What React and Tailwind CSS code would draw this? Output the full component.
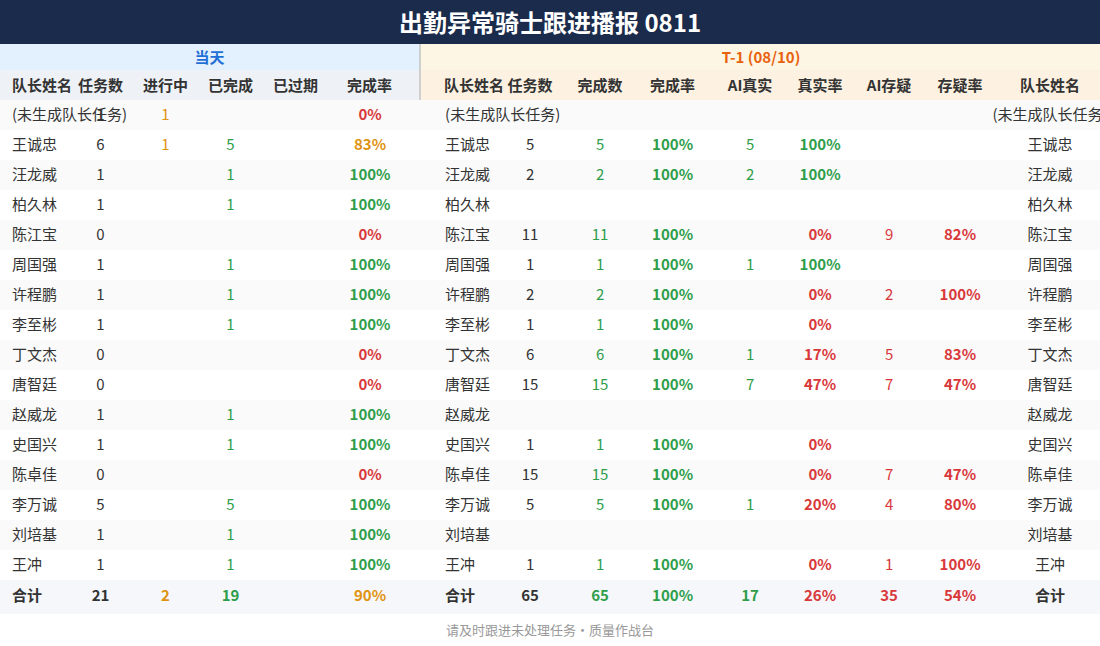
import React from "react";

const G = "text-[#2e9e4a]";
const R = "text-[#d9383a]";
const O = "text-[#e0930f]";

const leftRows = [
  ["(未生成队长任务)", "1", ["1"], null, "", ["0%", "r"]],
  ["王诚忠", "6", ["1"], "5", "", ["83%", "o"]],
  ["汪龙威", "1", null, "1", "", ["100%", "g"]],
  ["柏久林", "1", null, "1", "", ["100%", "g"]],
  ["陈江宝", "0", null, null, "", ["0%", "r"]],
  ["周国强", "1", null, "1", "", ["100%", "g"]],
  ["许程鹏", "1", null, "1", "", ["100%", "g"]],
  ["李至彬", "1", null, "1", "", ["100%", "g"]],
  ["丁文杰", "0", null, null, "", ["0%", "r"]],
  ["唐智廷", "0", null, null, "", ["0%", "r"]],
  ["赵威龙", "1", null, "1", "", ["100%", "g"]],
  ["史国兴", "1", null, "1", "", ["100%", "g"]],
  ["陈卓佳", "0", null, null, "", ["0%", "r"]],
  ["李万诚", "5", null, "5", "", ["100%", "g"]],
  ["刘培基", "1", null, "1", "", ["100%", "g"]],
  ["王冲", "1", null, "1", "", ["100%", "g"]],
];

// name, tasks, done, rate, aiTrue, trueRate, aiDoubt, doubtRate
const rightRows = [
  ["(未生成队长任务)", "", "", "", "", "", "", ""],
  ["王诚忠", "5", "5", "100%", "5", "100%", "", ""],
  ["汪龙威", "2", "2", "100%", "2", "100%", "", ""],
  ["柏久林", "", "", "", "", "", "", ""],
  ["陈江宝", "11", "11", "100%", "", "0%", "9", "82%"],
  ["周国强", "1", "1", "100%", "1", "100%", "", ""],
  ["许程鹏", "2", "2", "100%", "", "0%", "2", "100%"],
  ["李至彬", "1", "1", "100%", "", "0%", "", ""],
  ["丁文杰", "6", "6", "100%", "1", "17%", "5", "83%"],
  ["唐智廷", "15", "15", "100%", "7", "47%", "7", "47%"],
  ["赵威龙", "", "", "", "", "", "", ""],
  ["史国兴", "1", "1", "100%", "", "0%", "", ""],
  ["陈卓佳", "15", "15", "100%", "", "0%", "7", "47%"],
  ["李万诚", "5", "5", "100%", "1", "20%", "4", "80%"],
  ["刘培基", "", "", "", "", "", "", ""],
  ["王冲", "1", "1", "100%", "", "0%", "1", "100%"],
];

const colorOf = (c) => (c === "g" ? G : c === "r" ? R : O);

export default function App() {
  const font = {
    fontFamily: '"Noto Sans CJK SC", "Noto Sans", sans-serif',
  };
  return (
    <div
      className="w-[1100px] h-[646px] bg-white overflow-hidden text-[#333333]"
      style={font}
    >
      <div className="h-[44px] bg-[#1b2b4b] flex items-center justify-center text-white text-[24px] font-bold">
        出勤异常骑士跟进播报 0811
      </div>
      <table className="table-fixed border-collapse w-[1108px] text-[15px]">
        <colgroup>
          <col className="w-[68px]" />
          <col className="w-[65px]" />
          <col className="w-[65px]" />
          <col className="w-[65px]" />
          <col className="w-[65px]" />
          <col className="w-[92px]" />
          <col className="w-[75px]" />
          <col className="w-[70px]" />
          <col className="w-[70px]" />
          <col className="w-[75px]" />
          <col className="w-[80px]" />
          <col className="w-[60px]" />
          <col className="w-[78px]" />
          <col className="w-[64px]" />
          <col className="w-[116px]" />
        </colgroup>
        <thead>
          <tr className="h-[26px]">
            <th
              colSpan={6}
              className="bg-[#e3f0fd] text-[#1f6fd6] text-[15px] font-bold p-0 text-center"
            >
              当天
            </th>
            <th
              colSpan={9}
              className="bg-[#fef6e4] text-[#e8620e] text-[15px] font-bold p-0 border-l-2 border-[#cfcfcf]"
            >
              <div className="w-[680px] text-center">T-1 (08/10)</div>
            </th>
          </tr>
          <tr className="h-[30px] font-bold text-[15px] text-[#333333]">
            <th className="bg-[#eef1f6] text-left pl-3 whitespace-nowrap font-bold">队长姓名</th>
            <th className="bg-[#eef1f6] text-center whitespace-nowrap font-bold">任务数</th>
            <th className="bg-[#eef1f6] text-center whitespace-nowrap font-bold">进行中</th>
            <th className="bg-[#eef1f6] text-center whitespace-nowrap font-bold">已完成</th>
            <th className="bg-[#eef1f6] text-center whitespace-nowrap font-bold">已过期</th>
            <th className="bg-[#eef1f6] text-center whitespace-nowrap font-bold pr-2">完成率</th>
            <th className="bg-[#fdf1e1] text-left pl-[23px] whitespace-nowrap font-bold border-l-2 border-[#cfcfcf]">队长姓名</th>
            <th className="bg-[#fdf1e1] text-center whitespace-nowrap font-bold">任务数</th>
            <th className="bg-[#fdf1e1] text-center whitespace-nowrap font-bold">完成数</th>
            <th className="bg-[#fdf1e1] text-center whitespace-nowrap font-bold">完成率</th>
            <th className="bg-[#fdf1e1] text-center whitespace-nowrap font-bold">AI真实</th>
            <th className="bg-[#fdf1e1] text-center whitespace-nowrap font-bold">真实率</th>
            <th className="bg-[#fdf1e1] text-center whitespace-nowrap font-bold">AI存疑</th>
            <th className="bg-[#fdf1e1] text-center whitespace-nowrap font-bold">存疑率</th>
            <th className="bg-[#fdf1e1] text-center whitespace-nowrap font-bold">队长姓名</th>
          </tr>
        </thead>
        <tbody>
          {leftRows.map((l, i) => {
            const r = rightRows[i];
            const bg = i % 2 === 0 ? "bg-[#fafafa]" : "bg-white";
            const trueRateColor = r[5] === "100%" ? G : R;
            return (
              <tr key={i} className={`h-[30px] ${bg}`}>
                <td className="pl-3 text-left whitespace-nowrap pt-0 pb-[2px]">{l[0]}</td>
                <td className="text-center pt-0 pb-[2px]">{l[1]}</td>
                <td className={`text-center pt-0 pb-[2px] ${O}`}>{l[2] ? l[2][0] : ""}</td>
                <td className={`text-center pt-0 pb-[2px] ${G}`}>{l[3] || ""}</td>
                <td className="text-center pt-0 pb-[2px]">{l[4]}</td>
                <td className={`text-center pt-0 pb-[2px] pr-2 font-semibold ${colorOf(l[5][1])}`}>{l[5][0]}</td>
                <td className="pl-[25px] text-left whitespace-nowrap pt-0 pb-[2px]">{r[0]}</td>
                <td className="text-center pt-0 pb-[2px]">{r[1]}</td>
                <td className={`text-center pt-0 pb-[2px] ${G}`}>{r[2]}</td>
                <td className={`text-center pt-0 pb-[2px] font-semibold ${G}`}>{r[3]}</td>
                <td className={`text-center pt-0 pb-[2px] ${G}`}>{r[4]}</td>
                <td className={`text-center pt-0 pb-[2px] font-semibold ${trueRateColor}`}>{r[5]}</td>
                <td className={`text-center pt-0 pb-[2px] ${R}`}>{r[6]}</td>
                <td className={`text-center pt-0 pb-[2px] font-semibold ${R}`}>{r[7]}</td>
                <td className="text-center whitespace-nowrap pt-0 pb-[2px]">{r[0]}</td>
              </tr>
            );
          })}
          <tr className="h-[34px] bg-[#f5f7fa] font-bold">
            <td className="pl-3 text-left whitespace-nowrap pt-0 pb-[3px]">合计</td>
            <td className="text-center pt-0 pb-[3px]">21</td>
            <td className={`text-center pt-0 pb-[3px] ${O}`}>2</td>
            <td className={`text-center pt-0 pb-[3px] ${G}`}>19</td>
            <td className="text-center pt-0 pb-[3px]"></td>
            <td className={`text-center pt-0 pb-[3px] pr-2 ${O}`}>90%</td>
            <td className="pl-[25px] text-left whitespace-nowrap pt-0 pb-[3px]">合计</td>
            <td className="text-center pt-0 pb-[3px]">65</td>
            <td className={`text-center pt-0 pb-[3px] ${G}`}>65</td>
            <td className={`text-center pt-0 pb-[3px] ${G}`}>100%</td>
            <td className={`text-center pt-0 pb-[3px] ${G}`}>17</td>
            <td className={`text-center pt-0 pb-[3px] ${R}`}>26%</td>
            <td className={`text-center pt-0 pb-[3px] ${R}`}>35</td>
            <td className={`text-center pt-0 pb-[3px] ${R}`}>54%</td>
            <td className="text-center whitespace-nowrap pt-0 pb-[3px]">合计</td>
          </tr>
        </tbody>
      </table>
      <div className="h-[32px] flex items-center justify-center text-[13px] text-[#999999]">
        请及时跟进未处理任务·质量作战台
      </div>
    </div>
  );
}
